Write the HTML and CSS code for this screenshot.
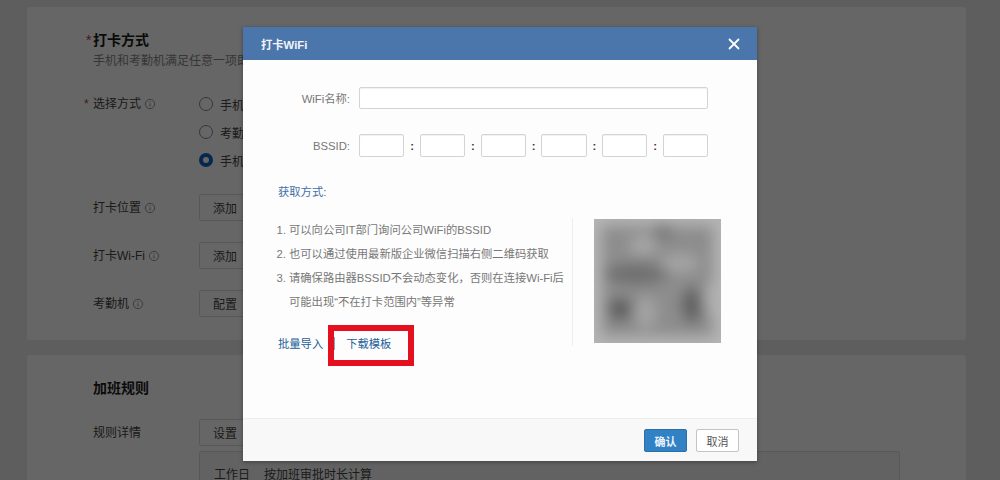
FILE: index.html
```html
<!DOCTYPE html>
<html lang="zh-CN">
<head>
<meta charset="utf-8">
<title>打卡WiFi</title>
<link rel="stylesheet" href="styles.css">
</head>
<body>
<main class="page">
  <section class="card card-first">
    <h2 class="card-title"><span class="req-title">*</span>打卡方式</h2>
    <p class="card-sub">手机和考勤机满足任意一项即可打卡</p>
    <div class="row row-radio">
      <div class="label"><span class="req">*</span>选择方式<svg class="info" viewBox="0 0 12 12"><circle cx="6" cy="6" r="4.6"/><path d="M6 5.4v3M6 3.4v1"/></svg></div>
      <div class="radios">
        <label class="radio"><i class="dot"></i>手机</label>
        <label class="radio"><i class="dot"></i>考勤机</label>
        <label class="radio"><i class="dot dot-on"></i>手机和考勤机</label>
      </div>
    </div>
    <div class="row"><div class="label">打卡位置<svg class="info" viewBox="0 0 12 12"><circle cx="6" cy="6" r="4.6"/><path d="M6 5.4v3M6 3.4v1"/></svg></div><button class="btn">添加</button></div>
    <div class="row"><div class="label">打卡Wi-Fi<svg class="info" viewBox="0 0 12 12"><circle cx="6" cy="6" r="4.6"/><path d="M6 5.4v3M6 3.4v1"/></svg></div><button class="btn">添加</button></div>
    <div class="row"><div class="label">考勤机<svg class="info" viewBox="0 0 12 12"><circle cx="6" cy="6" r="4.6"/><path d="M6 5.4v3M6 3.4v1"/></svg></div><button class="btn">配置</button></div>
  </section>
  <section class="card card-second">
    <h2 class="card-title">加班规则</h2>
    <div class="row row-rule"><div class="label">规则详情</div><button class="btn">设置</button></div>
    <div class="rule-box"><span class="rule-day">工作日</span><span>按加班审批时长计算</span></div>
  </section>
</main>

<div class="overlay"></div>

<div class="dialog">
  <header class="dialog-head">
    <span>打卡WiFi</span>
    <svg class="close" viewBox="0 0 12 12"><path d="M1 1l10 10M11 1L1 11"/></svg>
  </header>
  <div class="dialog-body">
    <div class="field field-name">
      <span class="field-label">WiFi名称:</span>
      <input class="input input-wide" type="text">
    </div>
    <div class="field field-bssid">
      <span class="field-label">BSSID:</span>
      <div class="bssid">
        <input class="input" type="text"><b>:</b>
        <input class="input" type="text"><b>:</b>
        <input class="input" type="text"><b>:</b>
        <input class="input" type="text"><b>:</b>
        <input class="input" type="text"><b>:</b>
        <input class="input" type="text">
      </div>
    </div>
    <div class="how-title">获取方式:</div>
    <div class="how">
      <div class="how-left">
        <ol class="steps">
          <li>可以向公司IT部门询问公司WiFi的BSSID</li>
          <li>也可以通过使用最新版企业微信扫描右侧二维码获取</li>
          <li>请确保路由器BSSID不会动态变化，否则在连接Wi-Fi后可能出现“不在打卡范围内”等异常</li>
        </ol>
        <div class="links"><a>批量导入</a><i class="sep"></i><a>下载模板</a></div>
      </div>
      <div class="qr">
        <svg viewBox="0 0 127 124" preserveAspectRatio="none">
          <defs>
            <filter id="soft" x="-30%" y="-30%" width="160%" height="160%"><feGaussianBlur stdDeviation="7"/></filter>
            <clipPath id="qrclip"><rect width="127" height="124"/></clipPath>
          </defs>
          <g clip-path="url(#qrclip)">
            <rect width="127" height="124" fill="#b4b4b4"/>
            <g filter="url(#soft)">
              <rect x="8" y="7" width="111" height="110" fill="#8d8d8d"/>
              <ellipse cx="69" cy="13" rx="10" ry="8" fill="#787878"/>
              <ellipse cx="49" cy="26" rx="14" ry="10" fill="#a6a6a6"/>
              <ellipse cx="86" cy="44" rx="20" ry="9" fill="#a4a4a4"/>
              <ellipse cx="42" cy="55" rx="32" ry="11" fill="#707070"/>
              <ellipse cx="26" cy="90" rx="12" ry="12" fill="#5e5e5e"/>
              <ellipse cx="52" cy="94" rx="10" ry="16" fill="#a4a4a4"/>
              <ellipse cx="98" cy="86" rx="11" ry="18" fill="#626262"/>
              <ellipse cx="116" cy="80" rx="6" ry="16" fill="#acacac"/>
            </g>
          </g>
        </svg>
      </div>
    </div>
  </div>
  <footer class="dialog-foot">
    <button class="foot-btn foot-ok">确认</button>
    <button class="foot-btn foot-cancel">取消</button>
  </footer>
</div>

<div class="highlight"></div>
</body>
</html>
```

FILE: styles.css
```css
* { box-sizing: border-box; }
html, body { margin: 0; padding: 0; }
body {
  width: 1000px;
  height: 480px;
  overflow: hidden;
  position: relative;
  background: #ebebeb;
  font-family: "Liberation Sans", "Noto Sans CJK SC", sans-serif;
  font-size: 12px;
  color: #333;
}
.page {
  padding: 7px 34px 0 27px;
  display: flex;
  flex-direction: column;
  gap: 15px;
}
.card {
  background: #fff;
  padding-left: 66px;
  border-radius: 3px;
}
.card-first { height: 333px; padding-top: 24px; }
.card-second { height: 300px; padding-top: 24px; }
.card-title {
  margin: 0;
  font-size: 14px;
  line-height: 18px;
  font-weight: 700;
  color: #1c1c1c;
}
.req-title { position: absolute; margin-left: -7px; color: #b8394a; font-weight: 400; }
.card-sub { margin: 3px 0 0; line-height: 18px; color: #888; }
.row { display: flex; align-items: center; height: 27px; margin-top: 21px; }
.row-radio { align-items: flex-start; height: auto; margin-top: 25px; }
.row-radio + .row { margin-top: 25px; }
.row-rule { margin-top: 22px; }
.label {
  width: 106px;
  display: flex;
  align-items: center;
  position: relative;
  color: #444;
  line-height: 18px;
}
.req { position: absolute; left: -9px; color: #b8394a; }
.info { width: 12px; height: 12px; margin-left: 3px; fill: none; stroke: #999; stroke-width: 1; }
.radios { display: flex; flex-direction: column; gap: 10px; }
.radio { display: flex; align-items: center; height: 18px; color: #444; white-space: nowrap; }
.dot { width: 14px; height: 14px; border: 1px solid #888; border-radius: 50%; margin-right: 7px; background: #fff; }
.dot-on { border: 4px solid #0f62c4; }
.btn {
  width: 52px;
  height: 27px;
  border: 1px solid #ddd;
  border-radius: 2px;
  background: #fff;
  color: #444;
  font: inherit;
  padding: 0;
}
.rule-box {
  margin: 5px 0 0 106px;
  width: 701px;
  height: 80px;
  border: 1px solid #ddd;
  border-radius: 2px;
  background: #f5f5f5;
  padding: 13px 14px;
  color: #444;
}
.rule-day { margin-right: 14px; }

.overlay { position: absolute; inset: 0; background: rgba(0, 0, 0, .6); }

.dialog {
  position: absolute;
  left: 243px;
  top: 27px;
  width: 514px;
  height: 434px;
  background: #fdfdfd;
  font-size: 11.3px;
  display: flex;
  flex-direction: column;
  box-shadow: 0 1px 4px rgba(0, 0, 0, .35);
}
.dialog-head {
  height: 33px;
  flex: none;
  background: #4a76ab;
  color: #f2f5f9;
  display: flex;
  align-items: center;
  justify-content: space-between;
  padding: 0 17px 0 18px;
  font-weight: 700;
}
.close { width: 12px; height: 12px; fill: none; stroke: #fff; stroke-width: 1.8; }
.dialog-body { flex: 1; padding: 27px 0 0; min-height: 0; }
.field { display: flex; align-items: center; }
.field-bssid { margin-top: 25px; }
.field-label { width: 107px; text-align: right; color: #777; margin-right: 9px; }
.input {
  width: 45.3px;
  height: 23px;
  border: 1px solid #d4d4d4;
  border-radius: 2px;
  background: #fff;
  padding: 0;
  box-shadow: inset 0 1px 1px rgba(0, 0, 0, .06);
}
.input-wide { width: 349px; height: 22px; }
.bssid { display: flex; align-items: center; }
.bssid b { width: 15.5px; text-align: center; color: #333; font-weight: 700; }
.how-title { margin: 26px 0 0 35px; line-height: 18px; color: #3f6fa6; }
.how { display: flex; margin: 17px 0 0 0; height: 128px; }
.how-left {
  width: 330px;
  border-right: 1px solid #eee;
  padding-left: 34px;
  display: flex;
  flex-direction: column;
}
.steps {
  margin: 0;
  padding: 0 0 0 12px;
  color: #777;
  line-height: 24px;
  width: 292px;
}
.links { display: flex; align-items: center; margin-top: 21px; padding-left: 1px; color: #245f98; }
.sep { width: 1px; height: 13px; background: #8aa6c2; margin: 0 11px; }
.qr { margin: 1px 0 0 21px; width: 127px; height: 124px; flex: none; }
.qr svg { display: block; width: 100%; height: 100%; }
.dialog-foot {
  height: 43px;
  flex: none;
  background: #f8f8f8;
  border-top: 1px solid #eee;
  display: flex;
  justify-content: flex-end;
  align-items: flex-start;
  gap: 9px;
  padding: 10px 18px 0 0;
}
.foot-btn { width: 43px; height: 23px; border-radius: 2px; font: inherit; font-size: 11px; padding: 0; }
.foot-ok { background: #3281c4; border: 1px solid #2a6fa8; color: #eaf3fb; font-weight: 700; }
.foot-cancel { background: #fff; border: 1px solid #c4c4c4; color: #555; }

.highlight {
  position: absolute;
  left: 328px;
  top: 325px;
  width: 86px;
  height: 41px;
  border: 6px solid #e5101f;
  pointer-events: none;
}
```
